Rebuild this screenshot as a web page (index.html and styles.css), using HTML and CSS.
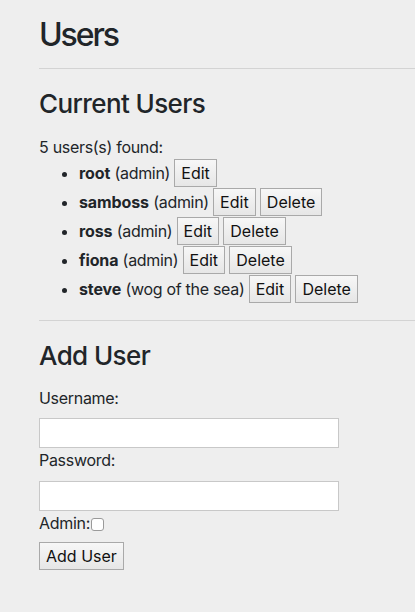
FILE: index.html
```html
<!DOCTYPE html>
<html>
<head>
<meta charset="utf-8">
<link rel="stylesheet" href="styles.css">
</head>
<body>
<div class="container">
  <h1 class="title">Users</h1>
  <hr class="rule">
  <h2 class="section-title">Current Users</h2>
  <div class="count">5 users(s) found:</div>
  <ul class="user-list">
    <li><b>root</b> (admin) <button class="btn">Edit</button></li>
    <li><b>samboss</b> (admin) <button class="btn">Edit</button> <button class="btn">Delete</button></li>
    <li><b>ross</b> (admin) <button class="btn">Edit</button> <button class="btn">Delete</button></li>
    <li><b>fiona</b> (admin) <button class="btn">Edit</button> <button class="btn">Delete</button></li>
    <li><b>steve</b> (wog of the sea) <button class="btn">Edit</button> <button class="btn">Delete</button></li>
  </ul>
  <hr class="rule">
  <h2 class="section-title">Add User</h2>
  <form class="form">
    <label class="field-label">Username:</label>
    <input class="text-input" type="text">
    <label class="field-label tight">Password:</label>
    <input class="text-input" type="password">
    <div class="check-row"><span>Admin:</span><span class="checkbox"></span></div>
    <button class="btn submit" type="button">Add User</button>
  </form>
</div>
</body>
</html>
```
FILE: styles.css
```css
html, body {
  margin: 0;
  padding: 0;
  background: #eeeeee;
}
body {
  font-family: Inter, "Noto Sans", sans-serif;
  font-size: 16px;
  line-height: 1.5;
  color: #212529;
  letter-spacing: -0.3px;
}
.container {
  padding-left: 39px;
}
.title {
  margin: 0;
  padding-top: 16px;
  font-size: 32px;
  font-weight: 500;
  line-height: 1.2;
  letter-spacing: -2.1px;
}
.rule {
  border: 0;
  border-top: 1px solid #d3d3d3;
  margin: 14px 0 19px;
}
.section-title {
  margin: 0 0 8px;
  font-size: 26px;
  font-weight: 500;
  line-height: 1.2;
  letter-spacing: -0.6px;
}
.count {
  margin-top: 15px;
}
.user-list {
  margin: 0 0 17px;
  padding-left: 40px;
}
.user-list li {
  margin: 0 0 1px;
}
.user-list b {
  font-weight: 700;
  letter-spacing: -0.1px;
}
.btn {
  font-family: Inter, "Noto Sans", sans-serif;
  font-size: 16px;
  line-height: 24px;
  letter-spacing: 0;
  color: #111;
  padding: 1px 6px;
  border: 1px solid #a9a9a9;
  border-radius: 0;
  background: linear-gradient(#f7f7f7, #e6e6e6);
}
.form {
  display: flex;
  flex-direction: column;
  align-items: flex-start;
}
.field-label {
  margin-top: 7px;
  margin-bottom: 8px;
}
.field-label.tight {
  margin-top: 0;
  margin-bottom: 9px;
}
.text-input {
  width: 300px;
  height: 30px;
  box-sizing: border-box;
  border: 1px solid #c8c8c8;
  background: #fff;
  margin: 0;
  padding: 0 4px;
}
.check-row {
  display: flex;
  align-items: center;
}
.checkbox {
  box-sizing: border-box;
  width: 13px;
  height: 13px;
  border: 1px solid #9a9a9a;
  border-radius: 3px;
  background: #fff;
  margin-left: 1px;
  margin-top: 3px;
}
.submit {
  margin-top: 7px;
}
```
